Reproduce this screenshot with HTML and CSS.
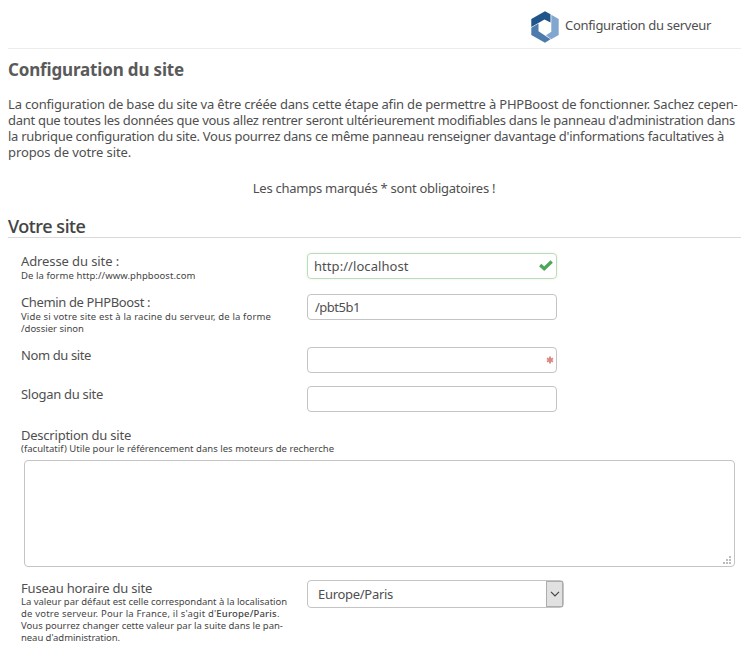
FILE: index.html
```html
<!DOCTYPE html>
<html lang="fr">
<head>
<meta charset="utf-8">
<title>Configuration du serveur</title>
<link rel="stylesheet" href="styles.css">
</head>
<body>
<header class="page-header">
  <svg class="logo" viewBox="0 0 28 32" width="28" height="32">
    <path fill="#1f5588" d="M0.300 8 14 .3l5.500 3v8.200L13.500 8.600 0.300 16z"/>
    <path fill="#82a7cf" d="M20.300 3.800 27.700 8v16l-7.500 4.200-5.200-4 5.300-3.400z"/>
    <path fill="#4d7bac" d="M0.300 16.800 7.500 12.600v7.700l12 8L14 31.700 0.300 24z"/>
  </svg>
  <span class="step-title">Configuration du serveur</span>
</header>
<main>
  <h1>Configuration du site</h1>
  <p class="intro"><span class="l1">La configuration de base du site va être créée dans cette étape afin de permettre à PHPBoost de fonctionner. Sachez cepen-</span><br><span class="l2">dant que toutes les données que vous allez rentrer seront ultérieurement modifiables dans le panneau d'administration dans</span><br><span class="l3">la rubrique configuration du site. Vous pourrez dans ce même panneau renseigner davantage d'informations facultatives à</span><br><span class="l4">propos de votre site.</span></p>
  <p class="required-note">Les champs marqués * sont obligatoires !</p>
  <form>
    <h2>Votre site</h2>
    <div class="row row-address">
      <div class="label"><label>Adresse du site :</label><small>De la forme http://www.phpboost.com</small></div>
      <div class="field valid"><span>http://localhost</span>
        <svg class="check" viewBox="0 0 14 11" width="14" height="11"><path d="M1.200 5 5.200 8.700 12.700 1.500" fill="none" stroke="#4da65a" stroke-width="3.300"/></svg>
      </div>
    </div>
    <div class="row row-path">
      <div class="label"><label>Chemin de PHPBoost :</label><small class="path-hint">Vide si votre site est à la racine du serveur, de la forme</small><small>/dossier sinon</small></div>
      <div class="field"><span class="path-value">/pbt5b1</span></div>
    </div>
    <div class="row row-name">
      <div class="label"><label>Nom du site</label></div>
      <div class="field">
        <svg class="star" viewBox="0 0 8 8" width="8" height="8"><path d="M4 .5v7M1 2.300l6 3.400M7 2.300 1 5.700" stroke="#dc8984" stroke-width="1.900"/></svg>
      </div>
    </div>
    <div class="row row-slogan">
      <div class="label"><label>Slogan du site</label></div>
      <div class="field"></div>
    </div>
    <div class="row-description">
      <div class="label"><label>Description du site</label><small class="description-hint">(facultatif) Utile pour le référencement dans les moteurs de recherche</small></div>
      <div class="textarea">
        <svg class="grip" viewBox="0 0 8 8" width="8" height="8"><path fill="#bdbdbd" d="M6 0h2v2H6zM3 3h2v2H3zM6 3h2v2H6zM0 6h2v2H0zM3 6h2v2H3zM6 6h2v2H6z"/></svg>
      </div>
    </div>
    <div class="row row-timezone">
      <div class="label"><label>Fuseau horaire du site</label><small class="zone-1">La valeur par défaut est celle correspondant à la localisation</small><small class="zone-2">de votre serveur. Pour la France, il s'agit d'<b>Europe/Paris</b>.</small><small class="zone-3">Vous pourrez changer cette valeur par la suite dans le pan-</small><small class="zone-4">neau d'administration.</small></div>
      <div class="select"><span>Europe/Paris</span>
        <div class="arrow"><svg viewBox="0 0 10 6" width="10" height="6"><path d="M1 .8 5 4.800 9 .8" fill="none" stroke="#444" stroke-width="1.200"/></svg></div>
      </div>
    </div>
  </form>
</main>
</body>
</html>
```
FILE: styles.css
```css
* { box-sizing: border-box; }
body { margin: 0; width: 746px; height: 660px; overflow: hidden; background: #fff; color: #4f4f4f; font: 13px/16px "Noto Sans", sans-serif; }
main { padding: 0 5px 0 8px; }
.page-header { display: flex; align-items: flex-start; height: 49px; margin: 0 5px 0 8px; padding: 11px 0 0 523px; border-bottom: 1px solid #ececec; white-space: nowrap; }
.logo { flex: none; }
.step-title { margin: 6px 0 0 6px; letter-spacing: -.31px; }
h1 { margin: 11px 0 0; height: 20px; font-size: 17px; line-height: 20px; font-weight: 700; letter-spacing: -.16px; color: #5a5a5a; }
p { margin: 0; white-space: nowrap; }
.intro { margin-top: 16px; height: 64px; }
.l1 { letter-spacing: -.18px; }
.l2 { letter-spacing: -.294px; }
.l3 { letter-spacing: -.276px; }
.l4 { letter-spacing: -.1px; }
.required-note { margin-top: 20px; padding-right: 1px; text-align: center; letter-spacing: -.255px; }
h2 { margin: 20px 0 15px; height: 22px; font-size: 18px; line-height: 20px; font-weight: 500; letter-spacing: -.42px; -webkit-text-stroke: .1px #444; border-bottom: 1px solid #d9d9d9; color: #444; }
.row { display: flex; align-items: flex-start; }
.row-address { height: 41px; }
.row-path { height: 53px; }
.row-name { height: 39px; }
.row-slogan { height: 41px; }
.row-description { height: 153px; }
.label { width: 299px; padding-left: 13px; white-space: nowrap; }
.label label { display: block; height: 17px; }
.label small { display: block; font-size: 9.500px; line-height: 12px; color: #444; }
.row-address label { letter-spacing: -.1px; }
.row-address small { letter-spacing: .07px; }
.row-path label { letter-spacing: -.37px; }
.label .path-hint { letter-spacing: .15px; }
.row-name label { letter-spacing: -.39px; }
.row-slogan label { letter-spacing: -.29px; }
.row-description label { height: 16px; letter-spacing: -.23px; }
.description-hint { letter-spacing: .03px; }
.row-timezone label { height: 16px; letter-spacing: -.2px; }
.zone-1 { letter-spacing: -.02px; }
.zone-2 { letter-spacing: .19px; }
.zone-4 { letter-spacing: -.06px; }
b { font-weight: 500; }
.field { position: relative; width: 250px; height: 26px; padding: 4px 6px; border: 1px solid #c4c4c4; border-radius: 4px; }
.field span { letter-spacing: .06px; }
.field .path-value { margin-left: 1px; letter-spacing: -.5px; }
.valid { border-color: #bcdcbc; box-shadow: 0 0 3px #e0f2e0; }
.check { position: absolute; right: 3px; top: 6px; }
.star { position: absolute; right: 2px; top: 8px; }
.textarea { position: relative; width: 711px; height: 107px; margin: 5px 0 0 16px; border: 1px solid #c4c4c4; border-radius: 4px; }
.grip { position: absolute; right: 3px; bottom: 2px; }
.select { display: flex; justify-content: space-between; width: 257px; height: 28px; padding-left: 10px; border: 1px solid #c4c4c4; border-radius: 4px; }
.select span { margin-top: 5px; letter-spacing: -.29px; }
.arrow { display: flex; align-items: center; justify-content: center; width: 17px; background: #e1e1e1; border: 1px solid #adadad; }
```
